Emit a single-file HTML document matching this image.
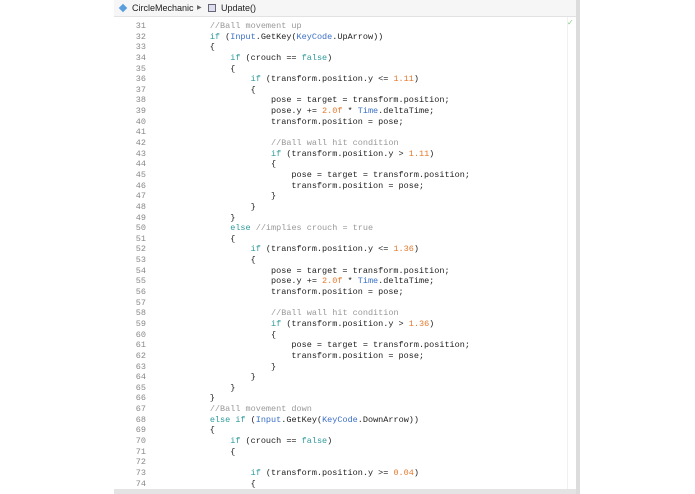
<!DOCTYPE html>
<html><head><meta charset="utf-8"><style>
body{margin:0;width:695px;height:494px;background:#fff;position:relative;overflow:hidden;font-family:"Liberation Sans",sans-serif}
#panel{position:absolute;left:114px;top:0;width:462px;height:494px;background:#fff;border-right:4px solid #dcdcdc;overflow:hidden}
#hdr{position:absolute;left:0;top:0;width:462px;height:16px;background:#f6f6f6;border-bottom:1px solid #e2e2e2;font-size:9px;color:#222;line-height:16px;z-index:2}
#bot{position:absolute;left:0;top:489px;width:466px;height:5px;background:#e4e4e4;z-index:2}
#vl{position:absolute;left:453px;top:17px;width:1px;height:472px;background:#f0f0f0}
#code{position:absolute;left:0;top:15px;width:450px;font-family:"Liberation Mono",monospace;font-size:8.5px;color:#222}
.l{height:10.65px;line-height:10.65px;position:relative}
.n{position:absolute;left:0;width:32px;text-align:right;color:#888}
.c{position:absolute;left:55px;white-space:pre}
.k{color:#2f9a9a}.t{color:#3b6fc7}.m{color:#e4782c}.g{color:#999}
</style></head><body>
<div id="panel">
<div id="hdr"><span style="position:absolute;left:6px;top:5px;width:6px;height:6px;background:#5a9ee0;transform:rotate(45deg)"></span><span style="position:absolute;left:18px">CircleMechanic</span><span style="position:absolute;left:83px;font-size:6px;color:#666">▶</span><span style="position:absolute;left:94px;top:4px;width:8px;height:8px;border:1px solid #667;background:#dde;box-sizing:border-box"></span><span style="position:absolute;left:107px">Update()</span></div>
<div id="vl"></div>
<span style="position:absolute;left:453px;top:18px;color:#8c8;font-size:8px">✓</span>
<div id="code">
<div class="l" style="height:6px;overflow:hidden"><span class="n" style="top:-5px">30</span></div>
<div class="l"><span class="n">31</span><span class="c">        <span class="g">//Ball movement up</span></span></div>
<div class="l"><span class="n">32</span><span class="c">        <span class="k">if</span> (<span class="t">Input</span>.GetKey(<span class="t">KeyCode</span>.UpArrow))</span></div>
<div class="l"><span class="n">33</span><span class="c">        {</span></div>
<div class="l"><span class="n">34</span><span class="c">            <span class="k">if</span> (crouch == <span class="k">false</span>)</span></div>
<div class="l"><span class="n">35</span><span class="c">            {</span></div>
<div class="l"><span class="n">36</span><span class="c">                <span class="k">if</span> (transform.position.y &lt;= <span class="m">1.11</span>)</span></div>
<div class="l"><span class="n">37</span><span class="c">                {</span></div>
<div class="l"><span class="n">38</span><span class="c">                    pose = target = transform.position;</span></div>
<div class="l"><span class="n">39</span><span class="c">                    pose.y += <span class="m">2.0f</span> * <span class="t">Time</span>.deltaTime;</span></div>
<div class="l"><span class="n">40</span><span class="c">                    transform.position = pose;</span></div>
<div class="l"><span class="n">41</span><span class="c"></span></div>
<div class="l"><span class="n">42</span><span class="c">                    <span class="g">//Ball wall hit condition</span></span></div>
<div class="l"><span class="n">43</span><span class="c">                    <span class="k">if</span> (transform.position.y &gt; <span class="m">1.11</span>)</span></div>
<div class="l"><span class="n">44</span><span class="c">                    {</span></div>
<div class="l"><span class="n">45</span><span class="c">                        pose = target = transform.position;</span></div>
<div class="l"><span class="n">46</span><span class="c">                        transform.position = pose;</span></div>
<div class="l"><span class="n">47</span><span class="c">                    }</span></div>
<div class="l"><span class="n">48</span><span class="c">                }</span></div>
<div class="l"><span class="n">49</span><span class="c">            }</span></div>
<div class="l"><span class="n">50</span><span class="c">            <span class="k">else</span> <span class="g">//implies crouch = true</span></span></div>
<div class="l"><span class="n">51</span><span class="c">            {</span></div>
<div class="l"><span class="n">52</span><span class="c">                <span class="k">if</span> (transform.position.y &lt;= <span class="m">1.36</span>)</span></div>
<div class="l"><span class="n">53</span><span class="c">                {</span></div>
<div class="l"><span class="n">54</span><span class="c">                    pose = target = transform.position;</span></div>
<div class="l"><span class="n">55</span><span class="c">                    pose.y += <span class="m">2.0f</span> * <span class="t">Time</span>.deltaTime;</span></div>
<div class="l"><span class="n">56</span><span class="c">                    transform.position = pose;</span></div>
<div class="l"><span class="n">57</span><span class="c"></span></div>
<div class="l"><span class="n">58</span><span class="c">                    <span class="g">//Ball wall hit condition</span></span></div>
<div class="l"><span class="n">59</span><span class="c">                    <span class="k">if</span> (transform.position.y &gt; <span class="m">1.36</span>)</span></div>
<div class="l"><span class="n">60</span><span class="c">                    {</span></div>
<div class="l"><span class="n">61</span><span class="c">                        pose = target = transform.position;</span></div>
<div class="l"><span class="n">62</span><span class="c">                        transform.position = pose;</span></div>
<div class="l"><span class="n">63</span><span class="c">                    }</span></div>
<div class="l"><span class="n">64</span><span class="c">                }</span></div>
<div class="l"><span class="n">65</span><span class="c">            }</span></div>
<div class="l"><span class="n">66</span><span class="c">        }</span></div>
<div class="l"><span class="n">67</span><span class="c">        <span class="g">//Ball movement down</span></span></div>
<div class="l"><span class="n">68</span><span class="c">        <span class="k">else if</span> (<span class="t">Input</span>.GetKey(<span class="t">KeyCode</span>.DownArrow))</span></div>
<div class="l"><span class="n">69</span><span class="c">        {</span></div>
<div class="l"><span class="n">70</span><span class="c">            <span class="k">if</span> (crouch == <span class="k">false</span>)</span></div>
<div class="l"><span class="n">71</span><span class="c">            {</span></div>
<div class="l"><span class="n">72</span><span class="c"></span></div>
<div class="l"><span class="n">73</span><span class="c">                <span class="k">if</span> (transform.position.y &gt;= <span class="m">0.04</span>)</span></div>
<div class="l"><span class="n">74</span><span class="c">                {</span></div>
</div>
<div id="bot"></div>
</div>
</body></html>
